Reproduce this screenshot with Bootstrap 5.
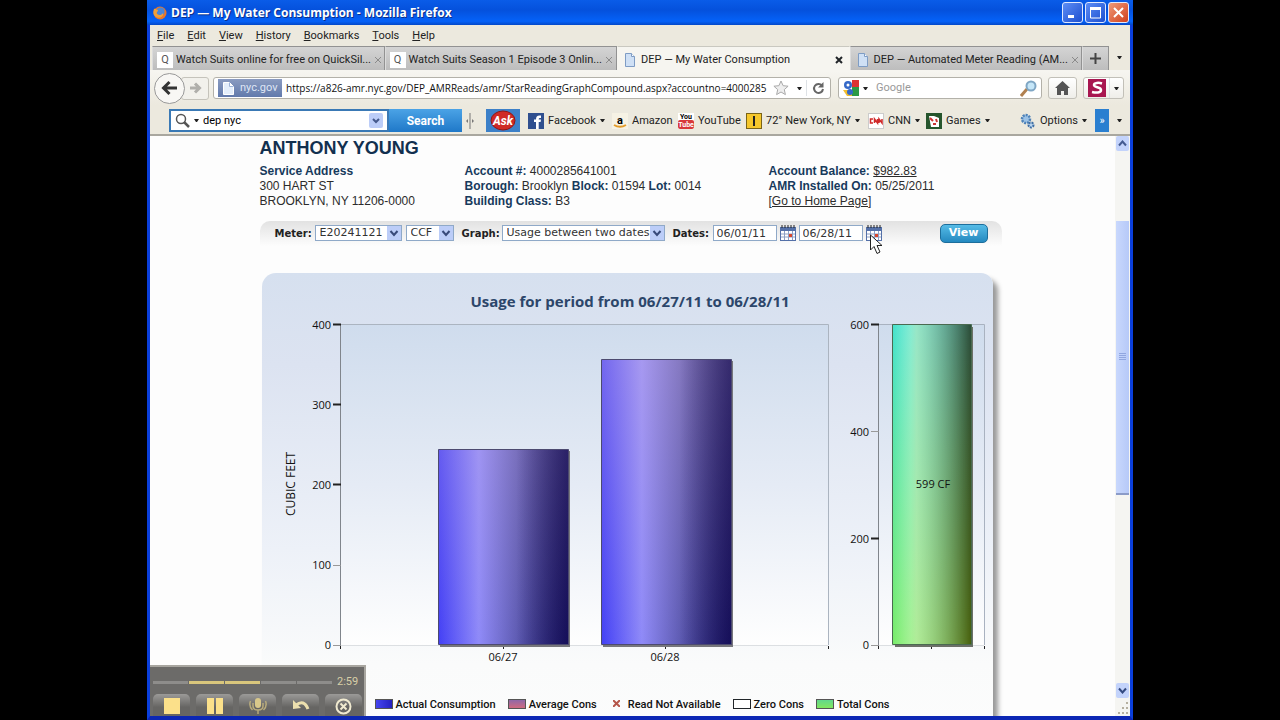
<!DOCTYPE html>
<html lang="en">
<head>
<meta charset="utf-8">
<meta name="viewport" content="width=device-width, initial-scale=1">
<title>DEP — My Water Consumption</title>
<link rel="stylesheet" href="https://cdn.jsdelivr.net/npm/bootstrap@5.3.0/dist/css/bootstrap.min.css">
<style>
  body { background:#000; font-family:Roboto,"Noto Sans",sans-serif; font-size:11px; line-height:16px; color:#222; height:100vh; overflow:hidden; padding:0 147px; }
  button { font:inherit; color:inherit; }
  a { color:inherit; }
  .xp-window { height:100vh; background:#ece9de; border:solid #0a3fdc; border-width:0 3px 4px; border-bottom-color:#0c27b4; }
  .titlebar { height:26px; margin:0 -3px; padding:0 4px 0 6px; background:linear-gradient(#0a5ce8,#0551dc 40%,#0562f8 85%,#0348c8); color:#fff; font-family:"Open Sans",sans-serif; font-size:12px; font-weight:700; text-shadow:1px 1px #0a2f8a; }
  .caps { gap:2px; }
  .cap { width:21px; height:21px; padding:0; border:1px solid #dfe9ff; border-radius:3px; background:linear-gradient(135deg,#5d8df5,#1c4fd0); line-height:0; }
  .cap-close { background:linear-gradient(135deg,#f09a78,#d0401c); }
  .menubar { height:21px; padding:1px 7px 0; gap:13px; }
  .menubar a { text-decoration:none; }
  .menubar a::first-letter { text-decoration:underline; }
  .tabstrip { height:25px; padding-left:2px; border-bottom:1px solid #f6f5f0; }
  .tab-item { flex:1 1 0; min-width:0; height:24px; border:1px solid #929292; border-bottom:0; border-left-color:#dcdcdc; background:linear-gradient(#d4d4d4,#bdbdbd); padding:3px 6px 0 4px; gap:3px; }
  .tab-item.current { background:#f6f5f0; border-color:#f6f5f0; border-top-color:#c9c8c0; }
  .tab-item a { text-decoration:none; flex:1; white-space:nowrap; }
  .tab-new { flex:none; width:27px; padding:0 7px; }
  .fav { width:16px; height:16px; background:#fff; color:#555; text-align:center; flex:none; }
  .xbtn { border:0; background:none; padding:0; line-height:0; color:#8a8a8a; }
  .navrow { height:35px; padding:1px 6px 0 4px; background:linear-gradient(#f6f5f0,#ece9de); }
  .back { width:31px; height:31px; border-radius:50%; border:1px solid #999; background:#f8f7f4; padding:0; z-index:1; line-height:0; }
  .fwd { width:28px; height:23px; border:1px solid #c5c3bb; border-radius:3px; background:#f2f1ec; margin-left:-4px; padding:0; line-height:0; }
  .field { height:22px; border:1px solid #b3b1a9; border-radius:3px; background:#fff; }
  .field input { border:0; padding:0; background:none; outline:0; min-width:0; color:#222; font-size:11px; }
  .field .url { font-family:"Open Sans","Noto Sans",sans-serif; font-size:10px; color:#111; }
  .field input::placeholder { color:#999; }
  .websearch { width:204px; margin-left:7px; }
  .siteid { width:64px; height:18px; background:linear-gradient(#8a9bc0,#627aac); color:#dfe6f5; flex:none; }
  .tool { height:22px; margin-left:6px; border:1px solid #c2c0b8; border-radius:3px; background:linear-gradient(#fff,#efeee9); padding:0; line-height:0; }
  .tool-home { width:29px; } .tool-s { width:41px; }
  .askbar { height:32px; padding:3px 8px 0 19px; border-bottom:2px solid #a9a79f; }
  .askfield { width:220px; height:23px; border:2px solid #3a79b5; background:#fff; }
  .askfield input { border:0; outline:0; padding:0; min-width:0; font-size:11px; }
  .gobtn { width:73px; height:23px; border:0; background:linear-gradient(#4ba3e6,#1f78c8); color:#fff; font-weight:700; font-size:12px; padding:0; }
  .bookmarks { display:grid; grid-template-columns:84px 66px 68px 122px 58px auto; }
  .bookmarks a { text-decoration:none; display:flex; align-items:center; gap:4px; white-space:nowrap; }
  .morebtn { width:14px; height:23px; background:#2a7fd0; }
  .ar { border:solid transparent; border-width:3px 2px 0; border-top-color:#222; width:5px; height:3px; flex:none; }
  .page { background:#fdfdfd; min-height:0; }
  .page main { padding-right:4px; }
  .sheet { width:742px; font-family:"Liberation Sans",Arial,sans-serif; font-size:12px; line-height:15px; color:#2c2c2c; }
  .sheet h1 { font-size:18px; line-height:20px; font-weight:700; color:#12304f; margin:0; padding:2px 0 6px; }
  .sheet b { color:#173a5c; }
  .col-a { width:205px; } .col-b { width:304px; }
  .filters { height:25px; margin-top:12px; padding:0 14px 0 15px; border-radius:10px 10px 0 0; background:linear-gradient(#e2e2e2,#fdfdfd); font-family:"DejaVu Sans",sans-serif; font-size:11px; }
  .filters label { font-weight:700; font-size:10px; color:#222; width:40px; }
  .filters select, .filters input { height:16px; border:1px solid #8fa9c8; background:#fff; padding:0 0 0 4px; font-size:11px; line-height:12px; border-radius:0; color:#333; }
  .filters select { appearance:none; background:#fff url("data:image/svg+xml,%3Csvg xmlns='http://www.w3.org/2000/svg' width='14' height='14'%3E%3Crect width='14' height='14' fill='%23bccdf8'/%3E%3Cpath d='M3.500 5l3.500 4 3.500-4' fill='none' stroke='%23384a7a' stroke-width='2'/%3E%3C/svg%3E") no-repeat right center; }
  .filters input { width:64px; padding-left:3px; }
  #meter { width:87px; } #unit { width:48px; } #graph { width:163px; }
  .viewbtn { width:48px; height:19px; padding:0; border:1px solid #1d6e9c; border-radius:5px; background:linear-gradient(#55bbe6,#2489c0); color:#fff; font-weight:700; font-size:11px; line-height:14px; }
  .cal { border:0; background:none; padding:0; margin:0 3px; width:16px; line-height:0; }
  .pointer { left:7px; top:9px; z-index:2; }
  .panelbox { margin:27px 9px 0 2px; border-radius:14px 12px 0 0; background:linear-gradient(#d6e0ef,#dce3f1 20%,#edf1f8 60%,#fafbfb 85%,#fcfcfc); box-shadow:5px 6px 5px #999; height:460px; }
  .panelbox text { font-family:"Open Sans",sans-serif; font-size:11px; fill:#111; }
  .legend-row { font-family:Roboto,sans-serif; font-size:11px; font-weight:500; color:#111; padding-left:113px; gap:12px; margin-top:2px; white-space:nowrap; }
  .legend-row i { width:18px; height:10px; border:1px solid #555; display:inline-block; margin-right:3px; vertical-align:-1px; }
  .scroller { width:15px; background:#f5f5f2; }
  .scroller button { width:13px; height:15px; border:0; border-radius:2px; background:#c3d3fb; padding:0; line-height:0; }
  .thumb { margin-top:70px; width:13px; height:274px; background:linear-gradient(90deg,#c9d8fd,#b6c9f8); border-bottom:2px solid #8b9bc8; }
  .recorder { left:0; bottom:0; width:216px; height:51px; background:#6c6b69; border:solid #a8a6a0; border-width:2px 2px 0 0; padding:7px 2px 0 3px; overflow:hidden; }
  .seg { width:35px; height:3px; background:#8e8d8b; } .seg.on { background:#d9c67c; }
  .recorder .time { color:#d8cfa8; }
  .recorder button { width:37px; height:22px; border:0; border-radius:5px 5px 0 0; background:linear-gradient(#9b9a98,#666563 60%); padding:2px 0 0; line-height:0; }
</style>
</head>
<body>
<div class="xp-window d-flex flex-column position-relative">
  <header class="titlebar d-flex align-items-center">
    <svg width="14" height="14" viewBox="0 0 14 14" class="me-1"><circle cx="7" cy="7" r="6.500" fill="#e8762a"/><circle cx="7.500" cy="5.500" r="4" fill="#4a86d8"/><path d="M1 3c2-1 2 1 4 1 0 2-2 2-1 4 2 2 5 1 6-1 1 4-4 6-7 4S0 6 1 3z" fill="#f2a03a"/></svg>
    <span class="flex-grow-1">DEP — My Water Consumption - Mozilla Firefox</span>
    <div class="caps d-flex">
      <button class="cap" aria-label="Minimize"><svg width="17" height="17"><path d="M4 12.500h6" stroke="#fff" stroke-width="3"/></svg></button>
      <button class="cap" aria-label="Maximize"><svg width="17" height="17"><path d="M3.500 4v10h10V4z" fill="none" stroke="#fff"/><path d="M3 4.500h11" stroke="#fff" stroke-width="3"/></svg></button>
      <button class="cap cap-close" aria-label="Close"><svg width="17" height="17"><path d="M4 4l9 9M13 4l-9 9" stroke="#fff" stroke-width="2"/></svg></button>
    </div>
  </header>
  <nav class="menubar d-flex align-items-center">
    <a href="#">File</a><a href="#">Edit</a><a href="#">View</a><a href="#">History</a><a href="#">Bookmarks</a><a href="#">Tools</a><a href="#">Help</a>
  </nav>
  <div class="tabstrip d-flex align-items-end">
    <div class="tab-item d-flex align-items-center"><span class="fav">Q</span><a href="#">Watch Suits online for free on QuickSil...</a><button class="xbtn" aria-label="Close tab"><svg width="8" height="8"><path d="M1 1l6 6M7 1L1 7" stroke="currentColor"/></svg></button></div>
    <div class="tab-item d-flex align-items-center"><span class="fav">Q</span><a href="#">Watch Suits Season 1 Episode 3 Onlin...</a><button class="xbtn" aria-label="Close tab"><svg width="8" height="8"><path d="M1 1l6 6M7 1L1 7" stroke="currentColor"/></svg></button></div>
    <div class="tab-item current d-flex align-items-center"><svg class="flex-shrink-0" width="16" height="16"><path d="M3.500 1.500h6l3 3v10h-9z" fill="#cfe0f5" stroke="#7e9cc4"/><path d="M9.500 1.500v3h3" fill="#fff" stroke="#7e9cc4"/></svg><a href="#">DEP — My Water Consumption</a><button class="xbtn text-dark" aria-label="Close tab"><svg width="8" height="8"><path d="M1 1l6 6M7 1L1 7" stroke="currentColor" stroke-width="2"/></svg></button></div>
    <div class="tab-item d-flex align-items-center"><svg class="flex-shrink-0" width="16" height="16"><path d="M3.500 1.500h6l3 3v10h-9z" fill="#cfe0f5" stroke="#7e9cc4"/><path d="M9.500 1.500v3h3" fill="#fff" stroke="#7e9cc4"/></svg><a href="#">DEP — Automated Meter Reading (AM...</a><button class="xbtn" aria-label="Close tab"><svg width="8" height="8"><path d="M1 1l6 6M7 1L1 7" stroke="currentColor"/></svg></button></div>
    <button class="tab-item tab-new d-flex align-items-center" aria-label="New tab"><svg width="11" height="11"><path d="M5.500 0v11M0 5.500h11" stroke="#444" stroke-width="2"/></svg></button>
    <div class="align-self-center px-2"><div class="ar"></div></div>
  </div>
  <div class="navrow d-flex align-items-center">
    <button class="back" aria-label="Back"><svg width="17" height="16"><path d="M16 8H4M8.500 2L2.500 8l6 6" fill="none" stroke="#333" stroke-width="3"/></svg></button>
    <button class="fwd" aria-label="Forward"><svg width="13" height="12"><path d="M1 6h8M6 1.500L10.500 6 6 10.500" fill="none" stroke="#b0afab" stroke-width="3"/></svg></button>
    <div class="field d-flex align-items-center flex-grow-1 ms-1 ps-1">
      <span class="siteid d-flex align-items-center gap-1 ps-1"><svg width="14" height="15"><path d="M1.500 1.500h6l4 4v8h-10z" fill="#e4eefb" stroke="#fff"/><path d="M7.500 1.500v4h4" fill="#fff" stroke="#9fb4d8"/></svg>nyc.gov</span>
      <input class="url flex-grow-1 ms-1" aria-label="Address" value="https://a826-amr.nyc.gov/DEP_AMRReads/amr/StarReadingGraphCompound.aspx?accountno=4000285">
      <svg width="16" height="16"><path d="M8 1l2.100 4.700 5 .5-3.800 3.400 1.100 5L8 12l-4.400 2.600 1.100-5L.9 6.200l5-.5z" fill="#eee" stroke="#aaa"/></svg>
      <span class="ar ms-2"></span>
      <button class="border-0 border-start bg-transparent p-0 ms-1 ps-1 pe-1" aria-label="Reload"><svg width="15" height="15"><path d="M11 4.500A4.500 4.500 0 1 0 12 8" fill="none" stroke="#666" stroke-width="2"/><path d="M12.500 1v5.500H7z" fill="#666"/></svg></button>
    </div>
    <div class="field websearch d-flex align-items-center ps-1 pe-1">
      <svg width="16" height="16"><rect width="16" height="16" fill="#fff"/><path d="M9 0h7v7H9z" fill="#d33"/><path d="M9 7h7v9H9z" fill="#2c9a45"/><path d="M0 10h9v6H4z" fill="#f2bd2c"/><circle cx="5" cy="5" r="4" fill="#3569c8"/><circle cx="7" cy="12" r="3" fill="#3569c8"/><circle cx="5" cy="5" r="1.500" fill="#fff"/></svg>
      <span class="ar mx-1"></span><input class="flex-grow-1 ms-1" aria-label="Search the web" placeholder="Google">
      <svg width="17" height="17"><path d="M1 16l6-7" stroke="#b08050" stroke-width="3"/><circle cx="11" cy="6" r="4.500" fill="#c5e6f8" stroke="#7fa6c4" stroke-width="2"/></svg>
    </div>
    <button class="tool tool-home" aria-label="Home"><svg width="17" height="16"><path d="M1 8l7.500-7L16 8h-2v7h-4v-4H7v4H3V8z" fill="#555"/></svg></button>
    <div class="tool tool-s d-flex align-items-center justify-content-between">
      <svg class="ms-1" width="18" height="18" viewBox="0 0 18 18"><rect width="18" height="18" fill="#a81650"/><path d="M14 4.500c-3-1-8-1-8 1.500 0 3 7 1.500 7 5 0 3-5 3-9 2" fill="none" stroke="#fff" stroke-width="2.500"/></svg>
      <span class="border-start h-100 d-flex align-items-center px-1"><span class="ar"></span></span>
    </div>
  </div>
  <div class="askbar d-flex align-items-center">
    <div class="askfield d-flex align-items-center ps-1 pe-1">
      <svg width="15" height="15"><circle cx="6" cy="6" r="4.500" fill="none" stroke="#555" stroke-width="1.500"/><path d="M9 9l5 5" stroke="#555" stroke-width="2.500"/></svg>
      <span class="ar mx-1"></span>
      <input class="flex-grow-1" aria-label="Toolbar search" value="dep nyc">
      <svg width="14" height="15"><rect width="14" height="15" rx="2" fill="#bccdf8"/><path d="M4 6l3 3 3-3" fill="none" stroke="#45598c" stroke-width="2"/></svg>
    </div>
    <button class="gobtn">Search</button>
    <svg width="8" height="16" class="ms-1 me-2"><path d="M4 0v16" stroke="#777"/><path d="M0 8l2-2v4zM8 8L6 6v4z" fill="#777"/></svg>
    <a href="#" class="ms-1 me-2 lh-1" aria-label="Ask"><svg width="34" height="23" viewBox="0 0 34 23"><rect width="34" height="23" fill="#3c80c8"/><ellipse cx="17" cy="11.500" rx="12" ry="9.500" fill="#cf2a26" stroke="#8e1716"/><text x="17" y="16" text-anchor="middle" font-size="12" font-weight="700" font-style="italic" fill="#fff">Ask</text></svg></a>
    <div class="bookmarks flex-grow-1">
      <a href="#"><svg width="16" height="16" viewBox="0 0 16 16"><rect width="16" height="16" fill="#2f4f8f"/><path d="M8 16V9H6V6.500h2C8 3 9.500 2 13 2.500V5c-2 0-2.300 0-2.300 1.500H13L12.600 9h-1.900v7z" fill="#fff"/></svg>Facebook<span class="ar"></span></a>
      <a href="#"><svg width="16" height="16" viewBox="0 0 16 16"><rect width="16" height="16" fill="#f6f2e4"/><text x="8" y="11" text-anchor="middle" font-size="11" font-weight="700">a</text><path d="M2 12q6 3.500 12 0" fill="none" stroke="#e39b28" stroke-width="2"/></svg>Amazon</a>
      <a href="#"><svg width="16" height="16" viewBox="0 0 16 16"><rect width="16" height="16" fill="#fff"/><rect y="7" width="16" height="9" rx="2" fill="#d8393b"/><text x="8" y="6" text-anchor="middle" font-size="7" font-weight="700">You</text><text x="8" y="14" text-anchor="middle" font-size="7" font-weight="700" fill="#fff">Tube</text></svg>YouTube</a>
      <a href="#"><svg width="16" height="16" viewBox="0 0 16 16"><rect x=".5" y=".5" width="15" height="15" fill="#f5c72c" stroke="#7a6418"/><path d="M8 3v10" stroke="#222" stroke-width="2"/></svg>72° New York, NY<span class="ar"></span></a>
      <a href="#"><svg width="16" height="16" viewBox="0 0 16 16"><rect x=".5" y=".5" width="15" height="15" fill="#fff" stroke="#ccc"/><path d="M5 6H2.500v4H5M6.500 10V6l3 4V6M11 10V6l3 4V6" fill="none" stroke="#d02a2a" stroke-width="1.500"/></svg>CNN<span class="ar"></span></a>
      <a href="#"><svg width="16" height="16" viewBox="0 0 16 16"><rect width="16" height="16" fill="#26552c"/><path d="M3 3h5l5 2v9H5z" fill="#fff"/><path d="M4 5l3 3M10 6l1 3M7 11h3" stroke="#c33" stroke-width="2"/></svg>Games<span class="ar"></span></a>
    </div>
    <a href="#" class="text-decoration-none d-flex align-items-center gap-1"><svg width="16" height="16"><circle cx="6" cy="6" r="4" fill="#9cc2e6" stroke="#4e82b8" stroke-width="2.500" stroke-dasharray="2 1"/><circle cx="11" cy="12" r="2.500" fill="#b8d4ee" stroke="#3f6ea5" stroke-width="2" stroke-dasharray="2 1"/></svg>Options<span class="ar"></span></a>
    <button class="morebtn border-0 p-0 text-white ms-2" aria-label="More">»</button>
    <span class="ar ms-2"></span>
  </div>

  <div class="page d-flex flex-grow-1 overflow-hidden">
    <main class="flex-grow-1">
      <div class="sheet mx-auto">
        <h1>ANTHONY YOUNG</h1>
        <div class="d-flex">
          <div class="col-a"><b>Service Address</b><br>300 HART ST<br>BROOKLYN, NY 11206-0000</div>
          <div class="col-b"><b>Account #:</b> 4000285641001<br><b>Borough:</b> Brooklyn <b>Block:</b> 01594 <b>Lot:</b> 0014<br><b>Building Class:</b> B3</div>
          <div><b>Account Balance:</b> <a href="#">$982.83</a><br><b>AMR Installed On:</b> 05/25/2011<br><a href="#">[Go to Home Page]</a></div>
        </div>
        <form class="filters d-flex align-items-center">
          <label for="meter">Meter:</label>
          <select id="meter"><option>E20241121</option></select>
          <select id="unit" class="ms-1" aria-label="Unit"><option>CCF</option></select>
          <label for="graph" class="ms-2">Graph:</label>
          <select id="graph"><option>Usage between two dates</option></select>
          <label for="from" class="ms-2">Dates:</label>
          <input id="from" value="06/01/11">
          <button type="button" class="cal" aria-label="Pick start date"><svg width="16" height="16"><rect y="2" width="16" height="14" fill="#5470a8"/><path d="M1 6h14v9H1z" fill="#fff"/><path d="M1 9h14M1 12h14M4.500 6v9M8.500 6v9M12.500 6v9" stroke="#8da0c4"/><path d="M2 0v3M5 0v3M8 0v3M11 0v3M14 0v3" stroke="#222"/><path d="M9 9h3v3H9z" fill="#d8462c"/></svg></button>
          <input aria-label="End date" value="06/28/11">
          <div class="position-relative"><button type="button" class="cal" aria-label="Pick end date"><svg width="16" height="16"><rect y="2" width="16" height="14" fill="#5470a8"/><path d="M1 6h14v9H1z" fill="#fff"/><path d="M1 9h14M1 12h14M4.500 6v9M8.500 6v9M12.500 6v9" stroke="#8da0c4"/><path d="M2 0v3M5 0v3M8 0v3M11 0v3M14 0v3" stroke="#222"/><path d="M9 9h3v3H9z" fill="#d8462c"/></svg></button>
            <svg class="pointer position-absolute" width="13" height="21"><path d="M.5 1v15l3.500-3.500 3 7 3-1.500-3-6.500h5z" fill="#fff" stroke="#222"/></svg></div>
          <button type="button" class="viewbtn ms-auto">View</button>
        </form>
        <section class="panelbox">
          <svg class="d-block w-100" viewBox="0 0 731 422" role="img" aria-label="Water usage charts">
            <defs>
              <linearGradient id="plot" x2="0" y2="1"><stop stop-color="#cfdced"/><stop offset=".5" stop-color="#e5ebf5"/><stop offset="1" stop-color="#fefefe"/></linearGradient>
              <linearGradient id="blueH"><stop stop-color="#4340f5"/><stop offset=".31" stop-color="#8f8af8"/><stop offset=".6" stop-color="#5f5cb4"/><stop offset="1" stop-color="#120d62"/></linearGradient>
              <linearGradient id="fadeV" x2="0" y2="1"><stop stop-color="#d8b8e0" stop-opacity=".32"/><stop offset="1" stop-color="#d8b8e0" stop-opacity="0"/></linearGradient>
              <linearGradient id="dark"><stop offset=".6" stop-color="#181442" stop-opacity="0"/><stop offset="1" stop-color="#181050" stop-opacity=".5"/></linearGradient>
              <linearGradient id="greenV" x2="0" y2="1"><stop stop-color="#44e2cc"/><stop offset="1" stop-color="#78ec68"/></linearGradient>
              <linearGradient id="greenD" x2="0" y2="1"><stop stop-color="#2c4c38"/><stop offset="1" stop-color="#48600e"/></linearGradient>
              <linearGradient id="shine"><stop stop-color="#fff" stop-opacity="0"/><stop offset=".3" stop-color="#eef8d0" stop-opacity=".5"/><stop offset="1" stop-color="#fff" stop-opacity="0"/></linearGradient>
              <linearGradient id="maskG"><stop offset=".25" stop-color="#000"/><stop offset="1" stop-color="#fff"/></linearGradient>
              <mask id="right"><rect x="629" y="52" width="80" height="320" fill="url(#maskG)"/></mask>
            </defs>
            <text x="368" y="34" text-anchor="middle" style="font-size:15px;font-weight:700;fill:#2c466a">Usage for period from 06/27/11 to 06/28/11</text>
            <path d="M78 51h488v321H78z" fill="url(#plot)"/>
            <path d="M78 51.500h488.500V372" fill="none" stroke="#abb4c0"/>
            <path d="M78 372.500h488" stroke="#dcdfe2"/>
            <path d="M78.500 51v325" stroke="#80858c"/>
            <path d="M71 51.500h8M71 131.500h8M71 211.500h8" stroke="#222" stroke-width="2"/><path d="M71 292.500h8M71 372.500h8" stroke="#999"/>
            <path d="M78.500 373v3M241.500 373v3M403.500 373v3M566.500 373v3" stroke="#222"/>
            <g text-anchor="end"><text x="69" y="56">400</text><text x="69" y="136">300</text><text x="69" y="216">200</text><text x="69" y="296">100</text><text x="69" y="376">0</text></g>
            <text transform="translate(33 211) rotate(-90)" text-anchor="middle" style="font-size:12px">CUBIC FEET</text>
            <path d="M178 178h130v196H178zM341 88h130v286H341z" fill="#77777c"/>
            <g stroke="#4c4a70"><path d="M176.500 176.500h130v195h-130z" fill="url(#blueH)"/><path d="M339.500 86.500h130v285h-130z" fill="url(#blueH)"/></g>
            <path d="M177 177h129v194H177zM340 87h129v284H340z" fill="url(#fadeV)"/>
            <path d="M177 177h129v194H177z" fill="url(#dark)"/><path d="M340 87h129v284H340z" fill="url(#dark)"/>
            <g text-anchor="middle"><text x="241" y="388">06/27</text><text x="403" y="388">06/28</text></g>
            <path d="M617 51h105v321H617z" fill="url(#plot)"/><path d="M616 51.500h106.500V372" fill="none" stroke="#a9b2c0"/><path d="M616 372.500h106" stroke="#dcdfe2"/><path d="M616.500 51v325" stroke="#80858c"/>
            <path d="M609 51.500h8M609 265.500h8" stroke="#222" stroke-width="2"/><path d="M609 158.500h8M609 372.500h8" stroke="#999"/>
            <path d="M616.500 373v3M669.500 373v3M722.500 373v3" stroke="#222"/>
            <g text-anchor="end"><text x="607" y="56">600</text><text x="607" y="163">400</text><text x="607" y="270">200</text><text x="607" y="376">0</text></g>
            <path d="M633 54h78v320h-78z" fill="#6c7068"/><path d="M630.500 51.500h79v320h-79z" fill="url(#greenV)" stroke="#4a6a50"/><path d="M631 52h78v319h-78z" fill="url(#greenD)" mask="url(#right)"/><path d="M631 52h78v319h-78z" fill="url(#shine)"/>
            <text x="671" y="215" text-anchor="middle">599 CF</text>
          </svg>
          <div class="legend-row d-flex">
            <span><i style="background:linear-gradient(90deg,#4545f0,#2520c0)"></i>Actual Consumption</span>
            <span><i style="background:linear-gradient(#8f68a8,#d06a80)"></i>Average Cons</span>
            <span><svg width="7" height="7" class="ms-1 me-2 mb-1"><path d="M0 0l7 7M7 0L0 7" stroke="#b5564a" stroke-width="2"/></svg>Read Not Available</span>
            <span><i class="bg-white border-dark"></i>Zero Cons</span>
            <span><i style="background:linear-gradient(#62d88c,#82e860)"></i>Total Cons</span>
          </div>
        </section>
      </div>
    </main>
    <aside class="scroller d-flex flex-column align-items-center">
      <button aria-label="Scroll up"><svg width="9" height="7"><path d="M1 5.500l3.500-4 3.500 4" fill="none" stroke="#445a90" stroke-width="2"/></svg></button>
      <div class="thumb d-flex align-items-center justify-content-center"><svg width="7" height="8"><path d="M0 .5h7M0 2.500h7M0 4.500h7M0 6.500h7" stroke="#90a6e0"/></svg></div>
      <button class="mt-auto" aria-label="Scroll down"><svg width="9" height="7"><path d="M1 1.500l3.500 4 3.500-4" fill="none" stroke="#334a80" stroke-width="2"/></svg></button>
      <svg class="mt-1" width="12" height="14"><path d="M9 1h2M5 6h2M9 6h2M1 11h2M5 11h2M9 11h2" stroke="#b5b0a0" stroke-width="2"/></svg>
    </aside>
  </div>

  <div class="recorder position-absolute">
    <div class="d-flex align-items-center mb-1" style="gap:1px"><span class="seg"></span><span class="seg on"></span><span class="seg on"></span><span class="seg"></span><span class="seg"></span><span class="time ms-1">2:59</span></div>
    <div class="d-flex" style="gap:6px">
      <button aria-label="Stop"><svg width="16" height="16"><path d="M0 0h16v16H0z" fill="#fbe08a"/></svg></button>
      <button aria-label="Pause"><svg width="16" height="16"><path d="M0 0h7v16H0zM9 0h7v16H9z" fill="#fbe08a"/></svg></button>
      <button aria-label="Microphone"><svg width="18" height="18"><rect x="6" y="1" width="6" height="10" rx="3" fill="#d9c88a"/><path d="M4 6v3q0 4 5 4t5-4V6M9 13v4M1.500 4q-2 5 2 9M16.500 4q2 5-2 9" fill="none" stroke="#b8ab7c" stroke-width="1.500"/></svg></button>
      <button aria-label="Undo"><svg width="18" height="16"><path d="M4 7q8-6 12 4" fill="none" stroke="#ecdfae" stroke-width="3"/><path d="M1 2v9l8-1z" fill="#ecdfae"/></svg></button>
      <button aria-label="Cancel"><svg width="17" height="17"><circle cx="8.500" cy="8.500" r="7" fill="none" stroke="#f0ead0" stroke-width="2"/><path d="M5.500 5.500l6 6M11.500 5.500l-6 6" stroke="#f0ead0" stroke-width="2"/></svg></button>
    </div>
  </div>
</div>
<script src="https://cdn.jsdelivr.net/npm/bootstrap@5.3.0/dist/js/bootstrap.bundle.min.js"></script>
</body>
</html>
